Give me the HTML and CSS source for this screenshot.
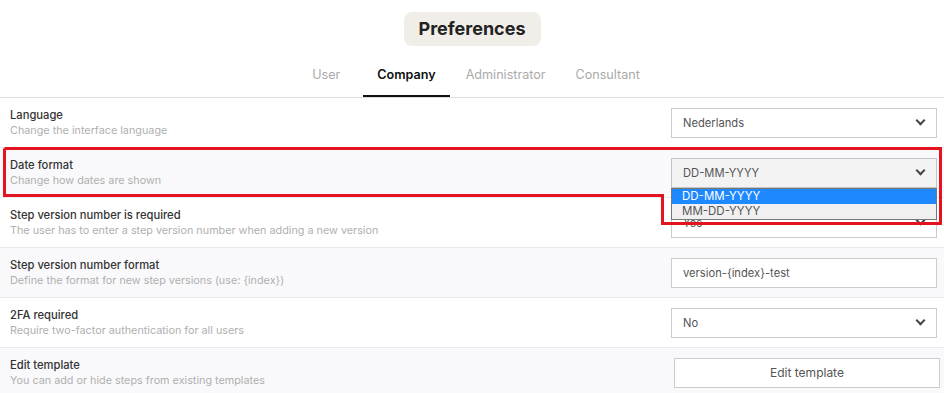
FILE: index.html
```html
<!DOCTYPE html>
<html lang="en">
<head>
  <meta charset="UTF-8" />
  <title>Preferences</title>
  <link rel="stylesheet" href="styles.css">
</head>
<body>

<div class="header">
  <h1 class="title">Preferences</h1>
  <div class="tabs">
    <div class="tab first">User</div>
    <div class="tab active">Company</div>
    <div class="tab">Administrator</div>
    <div class="tab">Consultant</div>
  </div>
</div>

<div class="settings">
  <div class="row">
    <div class="info">
      <div class="label">Language</div>
      <div class="desc">Change the interface language</div>
    </div>
    <div class="control">
      <div class="select">Nederlands <span class="chev"></span></div>
    </div>
  </div>

  <div class="row alt">
    <div class="info">
      <div class="label">Date format</div>
      <div class="desc">Change how dates are shown</div>
    </div>
    <div class="control open">
      <div class="select focused">DD-MM-YYYY <span class="chev"></span></div>
      <div class="dropdown">
        <div class="option selected">DD-MM-YYYY</div>
        <div class="option">MM-DD-YYYY</div>
      </div>
    </div>
  </div>

  <div class="row">
    <div class="info">
      <div class="label">Step version number is required</div>
      <div class="desc">The user has to enter a step version number when adding a new version</div>
    </div>
    <div class="control">
      <div class="select">Yes <span class="chev"></span></div>
    </div>
  </div>

  <div class="row alt">
    <div class="info">
      <div class="label">Step version number format</div>
      <div class="desc">Define the format for new step versions (use: {index})</div>
    </div>
    <div class="control">
      <div class="input">version-{index}-test</div>
    </div>
  </div>

  <div class="row">
    <div class="info">
      <div class="label">2FA required</div>
      <div class="desc">Require two-factor authentication for all users</div>
    </div>
    <div class="control">
      <div class="select">No <span class="chev"></span></div>
    </div>
  </div>

  <div class="row alt">
    <div class="info">
      <div class="label">Edit template</div>
      <div class="desc">You can add or hide steps from existing templates</div>
    </div>
    <div class="control">
      <button class="btn">Edit template</button>
    </div>
  </div>
</div>

<!-- highlight annotation drawn over the page -->
<svg class="highlight" width="944" height="393" viewBox="0 0 944 393">
  <polyline points="4.5,148.5 940.5,148.5 940.5,223.5 662.5,223.5 662.5,195.5 4.5,195.5 4.5,148.5" fill="none" stroke="#e3141f" stroke-width="3"/>
</svg>

</body>
</html>
```

FILE: styles.css
```css
body {
  font-family: Inter, "Noto Sans", Arial, sans-serif;
  background: #fff;
  margin: 0;
  padding: 0;
  color: #333;
  position: relative;
  height: 393px;
  overflow: hidden;
}
.header {
  display: flex;
  flex-direction: column;
  align-items: center;
  padding-top: 12px;
  border-bottom: 1px solid #ddd;
}
.title {
  margin: 0;
  background: #f1eeea;
  border-radius: 8px;
  padding: 0 15px;
  height: 34px;
  line-height: 34px;
  font-size: 18px;
  font-weight: 700;
  color: #222;
}
.tabs {
  display: flex;
  margin-top: 14px;
  margin-left: 8px;
}
.tab {
  padding: 0 14px;
  height: 37px;
  line-height: 29px;
  font-size: 12.6px;
  color: #aaa;
  margin: 0 1px;
  box-sizing: border-box;
}
.tab.first {
  margin-right: 8px;
}
.tab.active {
  color: #111;
  font-weight: 600;
  border-bottom: 2px solid #111;
}
.row {
  display: flex;
  align-items: center;
  justify-content: space-between;
  height: 50px;
  box-sizing: border-box;
  padding: 0 7px 0 10px;
  border-bottom: 1px solid #e6eaef;
}
.row.alt {
  background: #f9f9fb;
}
.label {
  font-size: 11.2px;
  font-weight: 500;
  color: #333;
  line-height: 15px;
}
.desc {
  font-size: 10.8px;
  color: #b0b0b0;
  line-height: 15px;
}
.control {
  position: relative;
  width: 266px;
}
.select, .input {
  height: 30px;
  box-sizing: border-box;
  border: 1px solid #ccc;
  background: #fff;
  font-size: 11.2px;
  color: #555;
  padding: 0 11px;
  display: flex;
  align-items: center;
  justify-content: space-between;
}
.select.focused {
  background: #f3f3f3;
  border-color: #c4c4c4;
}
.chev {
  width: 5px;
  height: 5px;
  border-right: 2px solid #444;
  border-bottom: 2px solid #444;
  transform: rotate(45deg);
  margin-top: -4px;
  margin-right: 1px;
}
.dropdown {
  position: absolute;
  top: 30px;
  left: 0;
  width: 266px;
  border: 1px solid #777;
  box-sizing: border-box;
  background: #f0f0f0;
  z-index: 5;
}
.option {
  height: 15px;
  line-height: 15px;
  font-size: 11.5px;
  padding: 0 10px;
  color: #555;
}
.option.selected {
  background: #1e88ff;
  color: #fff;
}
.btn {
  width: 266px;
  height: 30px;
  margin-left: 3px;
  margin-right: -2px;
  background: #fff;
  border: 1px solid #ccc;
  font-family: inherit;
  font-size: 12px;
  color: #555;
}
.highlight {
  position: absolute;
  top: 0;
  left: 0;
  pointer-events: none;
  z-index: 10;
}
```
